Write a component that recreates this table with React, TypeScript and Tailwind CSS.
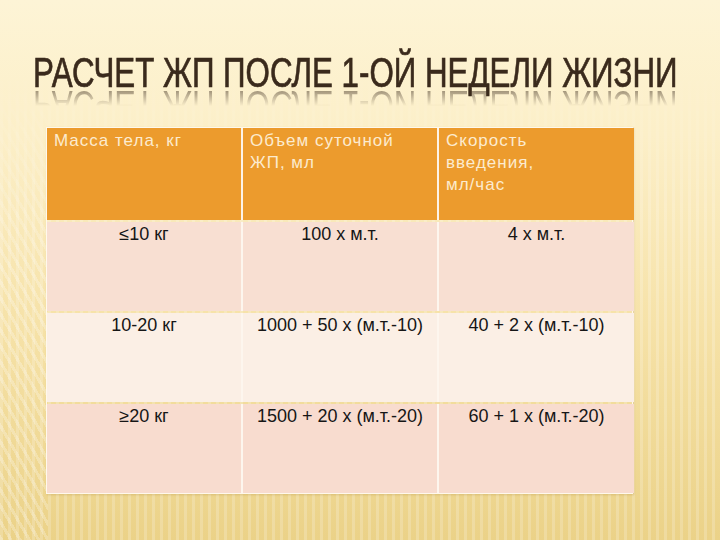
const rows = [
  ['≤10 кг', '100 х м.т.', '4 х м.т.'],
  ['10-20 кг', '1000 + 50 х (м.т.-10)', '40 + 2 х (м.т.-10)'],
  ['≥20 кг', '1500 + 20 х (м.т.-20)', '60 + 1 х (м.т.-20)'],
];

const rowBg = ['bg-[#f8dfd2]', 'bg-[#fbefe5]', 'bg-[#f8dccf]'];

const title = 'РАСЧЕТ ЖП ПОСЛЕ 1-ОЙ НЕДЕЛИ ЖИЗНИ';

export default function App() {
  return (
    <div className="relative w-[720px] h-[540px] overflow-hidden bg-[linear-gradient(to_bottom,#fdf4d6_0%,#fcefc8_25%,#f6e2a8_60%,#ebd288_100%)] font-['Liberation_Sans',Arial,sans-serif]">
      {/* stripe texture */}
      <div className="absolute inset-0 pointer-events-none bg-[repeating-linear-gradient(90deg,rgba(255,255,255,0.2)_0px,rgba(255,255,255,0.2)_3px,transparent_3px,transparent_8px)] [mask-image:linear-gradient(to_bottom,transparent_12%,black_40%)]" />
      <div className="absolute left-0 top-0 bottom-0 w-[48px] pointer-events-none bg-[repeating-linear-gradient(60deg,rgba(255,255,255,0.25)_0px,rgba(255,255,255,0.25)_3px,transparent_3px,transparent_8px)] [mask-image:linear-gradient(to_bottom,transparent_15%,black_50%)]" />

      <div className="relative flex flex-col">
        <div className="pt-[52px] pl-[33px] flex flex-col items-start">
          <div className="w-max origin-left scale-x-[0.745] text-[42px] leading-[42px] text-[#3a2a1c] [-webkit-text-stroke:0.7px_#3a2a1c] whitespace-nowrap">
            {title}
          </div>
          <div className="h-[18px] -mt-[6px] overflow-hidden [mask-image:linear-gradient(to_bottom,rgba(0,0,0,0.55),transparent)]">
            <div className="w-max -mt-[4px] [transform:scaleX(0.745)_scaleY(-1)] [transform-origin:0_50%] text-[42px] leading-[42px] text-[#3a2a1c] whitespace-nowrap">
              {title}
            </div>
          </div>
        </div>

        <div className="ml-[46px] mt-[21px] w-[587px] border border-[#fff8ec] shadow-[1px_1px_2px_rgba(160,120,40,0.25)]">
          <div className="grid grid-cols-[194px_194px_195px] gap-x-[2px] bg-[#fdf3e8]">
            <div className="bg-[#ec9b2d] h-[92px] pl-[7px] pt-[2px] text-[17px] leading-[22px] tracking-[1px] text-[#fcebcf]">
              Масса тела, кг
            </div>
            <div className="bg-[#ec9b2d] h-[92px] pl-[7px] pt-[2px] text-[17px] leading-[22px] tracking-[1px] text-[#fcebcf]">
              Объем суточной<br />ЖП, мл
            </div>
            <div className="bg-[#ec9b2d] h-[92px] pl-[7px] pt-[2px] text-[17px] leading-[22px] tracking-[1px] text-[#fcebcf]">
              Скорость<br />введения,<br />мл/час
            </div>
          </div>
          {rows.map((r, i) => (
            <div key={i} className="grid grid-cols-[194px_194px_195px] gap-x-[2px] mt-[2px] bg-[#fdf6ee]">
              {r.map((c, j) => (
                <div key={j} className={`${rowBg[i]} h-[89px] pt-[1px] text-center text-[18px] leading-[22px] text-[#161616]`}>
                  {c}
                </div>
              ))}
            </div>
          ))}
        </div>
      </div>
    </div>
  );
}
